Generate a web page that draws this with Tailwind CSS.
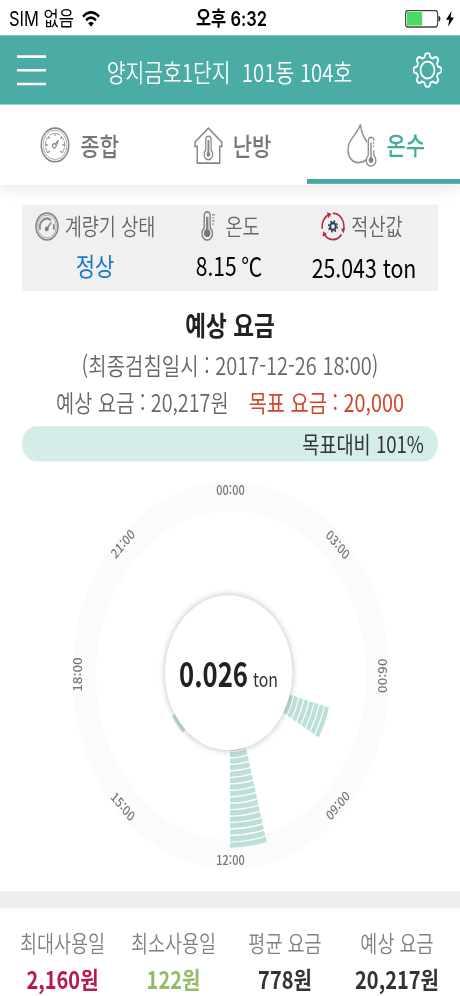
<!DOCTYPE html>
<html lang="ko">
<head>
<meta charset="utf-8">
<title>온수</title>
<script src="https://cdn.jsdelivr.net/npm/@tailwindcss/browser@4"></script>
</head>
<body class="w-[460px] h-[996px] overflow-hidden bg-white">
<div class="w-[460px] h-[818px] origin-top-left scale-y-[1.2176] flex flex-col font-['Noto_Sans_CJK_KR',sans-serif] whitespace-nowrap text-[#666]">

  <!-- Status bar -->
  <div class="h-[29px] shrink-0 grid grid-cols-3 items-center pl-[9px] pr-[6px] pt-[1px] text-black font-['Inter','Noto_Sans_CJK_KR',sans-serif]">
    <div class="flex items-center gap-[8px] text-[16.5px]"><span>SIM 없음</span>
      <svg class="w-[18px] h-[13px]" viewBox="0 0 18 13" fill="none" stroke="#000" stroke-width="2.3"><path d="M1 4.6Q9-2.2 17 4.6M4 7.7Q9 3.2 14 7.7"/><path d="M6.2 10.1Q9 7.6 11.8 10.1L9 13z" fill="#000" stroke="none"/></svg>
    </div>
    <div class="text-center text-[16.5px] font-semibold">오후 6:32</div>
    <div class="flex items-center justify-end gap-[5px]">
      <svg class="w-[36px] h-[15px]" viewBox="0 0 36 15"><rect x=".6" y=".6" width="32" height="13.6" rx="2.5" fill="#fff" stroke="#444" stroke-width="1.1"/><rect x="1.8" y="1.8" width="15.4" height="11.2" fill="#4cd964"/><path d="M33.5 5q2 .4 2 2.4t-2 2.4z" fill="#222"/></svg>
      <svg class="w-[8px] h-[13px]" viewBox="0 0 8 13"><path d="M5.6 0L0 7.3h3.3L2 13l6-7.6H4.6z"/></svg>
    </div>
  </div>

  <!-- Title bar -->
  <div class="h-[57.4px] shrink-0 bg-[#4aaca5] flex items-center justify-between px-[17px] text-white">
    <svg class="w-[29px] h-[26px]" viewBox="0 0 29 26" stroke="#fff" stroke-width="2.1"><path d="M0 1.5h29M0 12.7h29M0 24h29"/></svg>
    <div class="text-[20.4px] font-[350] whitespace-pre pt-[1px]">양지금호1단지  101동 104호</div>
    <svg class="w-[29px] h-[29px] mr-[1px]" viewBox="0 0 29 29" fill="none" stroke="#fff" stroke-width="1.7" stroke-linejoin="round"><circle cx="14.5" cy="14.5" r="7"/><path id="gear" d=""/></svg>
  </div>

  <!-- Tabs -->
  <div class="h-[66px] shrink-0 grid grid-cols-3 bg-white text-[21px] font-medium text-[#777] relative shadow-[0_5px_12px_rgba(0,0,0,0.08)]">
    <div class="flex items-center justify-center gap-[10px] pl-[6px]">
      <svg class="w-[30px] h-[30px]" viewBox="0 0 30 30" fill="none" stroke="#858585"><circle cx="15" cy="15" r="13.8" stroke-width="1.4"/><circle cx="15" cy="15" r="12" stroke-width=".6"/><path d="M7.8 21.5A9.6 9.6 0 1 1 22.2 21.5" stroke-width=".8" stroke-dasharray="4.6 1"/><path d="M7.8 21.5l2-1.6M5.5 15h2.3M8.2 8.3l1.6 1.6M15 5.4v2.2M21.8 8.3l-1.6 1.6M24.5 15h-2.3M22.2 21.5l-2-1.6" stroke-width="1"/><circle cx="14.3" cy="15.8" r="1.8"/><path d="M15.2 14.5l3.2-3.3-1.7 4.4"/></svg>
      <span>종합</span>
    </div>
    <div class="flex items-center justify-center gap-[10px] pl-[5px]">
      <svg class="w-[29px] h-[31px]" viewBox="0 0 29 31" fill="none" stroke="#858585" stroke-width="1.4"><path d="M3.2 30V16.2H1V12.8L14.3 1.2 27.8 12.8V16.2H25.7V30z"/><path d="M11.7 19.5V10.5a2.7 2.7 0 0 1 5.4 0V19.5a4.3 4.3 0 1 1-5.4 0z" stroke-width="1.2"/><path d="M14.4 11v11" stroke-width="1.9"/><circle cx="14.4" cy="22.8" r="1.9" fill="#858585" stroke="none"/></svg>
      <span>난방</span>
    </div>
    <div class="flex items-center justify-center gap-[10px] pl-[5px] text-[#44ab9d] border-b-[4.5px] border-[#44a99e] mb-[1px] pt-[4px]">
      <svg class="w-[30px] h-[36px]" viewBox="0 0 30 36" fill="none" stroke="#8e8e8e" stroke-width="1.4"><path d="M20 29.5Q16.5 32.5 11.5 32.5C5 32.5 1 28 1 22 1 13 11 9 13.5 1 14 7.5 16.5 11.5 20 15.5"/><path d="M21.3 26.8V14.5a2.8 2.8 0 0 1 5.6 0M26.8 22.5V26.8a4.8 4.8 0 1 1-5.5 0" stroke-width="1.3"/><path d="M24 16v13" stroke-width="1.5"/><circle cx="24" cy="30.5" r="2.3" fill="#808080" stroke="none"/><path d="M26 16.5h1M26 19h1"/></svg>
      <span>온수</span>
    </div>
  </div>

  <!-- Meter state -->
  <div class="mx-[22px] mt-[15.3px] h-[71.5px] shrink-0 bg-[#f0f0f0] grid grid-cols-[146px_124px_146px] relative">
    <div class="flex flex-col items-center">
      <div class="h-[36px] flex items-center gap-[6px] text-[18.6px] font-[350]">
        <svg class="w-[24px] h-[24px]" viewBox="0 0 24 24" fill="none" stroke="#858585"><circle cx="12" cy="12" r="11" stroke-width="1.5"/><circle cx="12" cy="12" r="9.3" stroke-width=".6"/><path d="M5.2 14.5A7 7 0 0 1 16 6.800M18.5 10q.8 2 .2 4.500" stroke-width="1.8"/><circle cx="11.8" cy="14" r="1.9" fill="#777" stroke="none"/><path d="M11.8 14l4.5-5.5" stroke-width="1.400"/></svg>
        <span class="-mt-[2px]">계량기 상태</span>
      </div>
      <div class="text-[21px] leading-[29px] text-[#1b75c8]">정상</div>
    </div>
    <div class="flex flex-col items-center">
      <div class="h-[36px] flex items-center gap-[9px] text-[18.6px] font-[350]">
        <svg class="w-[16px] h-[25px]" viewBox="0 0 16 25" fill="none" stroke="#858585"><path d="M4.2 14.5V4a3 3 0 0 1 6 0V14.5a5.3 5.3 0 1 1-6 0z" stroke-width="1.4"/><path d="M7.2 5v12" stroke-width="2.4"/><circle cx="7.2" cy="18.5" r="3.2" fill="#777" stroke="none"/><path d="M12 3.500h3M12 6h2M12 8.500h3M12 11h2" stroke-width=".9"/></svg>
        <span class="-mt-[2px]">온도</span>
      </div>
      <div class="text-[21px] leading-[29px] text-black -ml-[2px]">8.15 ℃</div>
    </div>
    <div class="flex flex-col items-center">
      <div class="h-[36px] flex items-center gap-[6px] text-[18.6px] font-[350] -ml-[6px]">
        <svg class="w-[24px] h-[24px]" viewBox="0 0 24 24" fill="none" stroke="#b52b42" stroke-width="1.5"><path d="M1.3 14A10.7 10.7 0 0 1 8 2.1M12 1.3A10.7 10.7 0 0 1 22.5 15M20.5 18.5A10.7 10.7 0 0 1 3 18"/><path d="M6 .2L10.5 1.800 7.3 5zM20 14l4-.8-1.500 4.500zM1.500 20.500l.8-4.600 3.500 2.400z" fill="#b52b42" stroke="none"/><circle cx="12" cy="12" r="2.8" stroke="#34405a" stroke-width="2"/><circle cx="12" cy="12" r="4.400" stroke="#34405a" stroke-width="1.300" stroke-dasharray="1.700 1.756"/></svg>
        <span class="-mt-[2px]">적산값</span>
      </div>
      <div class="text-[21.3px] leading-[29px] text-black -ml-[2px]">25.043 ton</div>
    </div>
  </div>

  <!-- Expected charge -->
  <div class="shrink-0 pt-[12px] flex flex-col items-center">
    <div class="text-[22.6px] leading-[32px] font-bold text-[#222]">예상 요금</div>
    <div class="text-[20px] leading-[34px] font-[350]">(최종검침일시 : 2017-12-26 18:00)</div>
    <div class="text-[19.8px] leading-[28px] flex gap-[20px] -mt-[1px] mb-[1px]"><span class="font-[350]">예상 요금 : 20,217원</span><span class="text-[#d2442b]">목표 요금 : 20,000</span></div>
  </div>
  <div class="mx-[22px] mt-[5px] h-[29px] shrink-0 rounded-full bg-[#d5ede8] text-[#333] text-[18.6px] leading-[28px] text-right pr-[14px]">목표대비 101%</div>

  <!-- Daily usage dial -->
  <svg class="w-[460px] h-[353px] shrink-0" viewBox="0 378.5 460 353" font-size="11">
    <defs><filter id="sh" x="-30%" y="-30%" width="160%" height="160%"><feDropShadow dx="0" dy="0" stdDeviation="3" flood-color="#000" flood-opacity=".3"/></filter></defs>
    <circle cx="231" cy="554" r="147" fill="none" stroke="#fbfbfb" stroke-width="24"/>
    <g id="bars" fill="none" stroke="#bce0d9"></g>
    <circle cx="228.7" cy="552" r="63.5" fill="#fff" filter="url(#sh)"/>
    <text x="179" y="564" font-size="28" font-weight="700" fill="#222" textLength="69" lengthAdjust="spacingAndGlyphs">0.026</text>
    <text x="253" y="564" font-size="16.5" fill="#333" textLength="25" lengthAdjust="spacingAndGlyphs">ton</text>
    <g id="hours" fill="#777" font-weight="500" text-anchor="middle"></g>
  </svg>

  <!-- Summary -->
  <div class="h-[13.8px] shrink-0 bg-[#eee]"></div>
  <div class="grow pt-[13px] px-[7px] grid grid-cols-[111px_111px_112px_112px] text-center text-[18.5px] leading-[30px] font-[350] text-[#808080]">
    <div>최대사용일<div class="text-[20px] leading-[29px] font-bold text-[#b9184f]">2,160원</div></div>
    <div>최소사용일<div class="text-[20px] leading-[29px] font-bold text-[#92bd68]">122원</div></div>
    <div>평균 요금<div class="text-[20px] leading-[29px] font-bold text-[#333]">778원</div></div>
    <div>예상 요금<div class="text-[20px] leading-[29px] font-bold text-[#333]">20,217원</div></div>
  </div>
</div>
<script>
  const CX = 230, CY = 554, NS = 'http://www.w3.org/2000/svg';
  const pt = (r, deg) => {
    const a = deg * Math.PI / 180;
    return (CX + r * Math.sin(a)).toFixed(2) + ' ' + (CY - r * Math.cos(a)).toFixed(2);
  };
  // One hour spans 15 degrees; each bar is a stack of arcs.
  const bars = [{ from: 105, max: 102.5 }, { from: 165, max: 141.7 }, { from: 225, max: 67 }];
  const PITCH = 5.3;
  for (const b of bars) {
    for (let r = b.max - 2.1; r > 60; r -= PITCH) {
      const p = document.createElementNS(NS, 'path');
      p.setAttribute('d', `M${pt(r, b.from)}A${r} ${r} 0 0 1 ${pt(r, b.from + 15)}`);
      p.setAttribute('stroke-width', 4.2);
      document.getElementById('bars').append(p);
    }
  }
  const hours = [['00:00', 0, 0], ['03:00', 45, 45], ['06:00', 90, 90], ['09:00', 135, -45], ['12:00', 180, 0], ['15:00', 225, 45], ['18:00', 270, -90], ['21:00', 315, -45]];
  for (const [label, at, turn] of hours) {
    const t = document.createElementNS(NS, 'text');
    t.textContent = label;
    t.setAttribute('transform', `translate(${pt(152, at)}) rotate(${turn}) translate(0.5 4)`);
    document.getElementById('hours').append(t);
  }
  // Eight-lobed settings gear.
  let d = '';
  for (let i = 0; i < 160; i++) {
    const a = i / 160 * 2 * Math.PI, r = 12.3 + 1.6 * Math.tanh(2.2 * Math.cos(8 * a));
    d += (i ? 'L' : 'M') + (14.5 + r * Math.sin(a)).toFixed(2) + ' ' + (14.5 - r * Math.cos(a)).toFixed(2);
  }
  document.getElementById('gear').setAttribute('d', d + 'z');
</script>
</body>
</html>
